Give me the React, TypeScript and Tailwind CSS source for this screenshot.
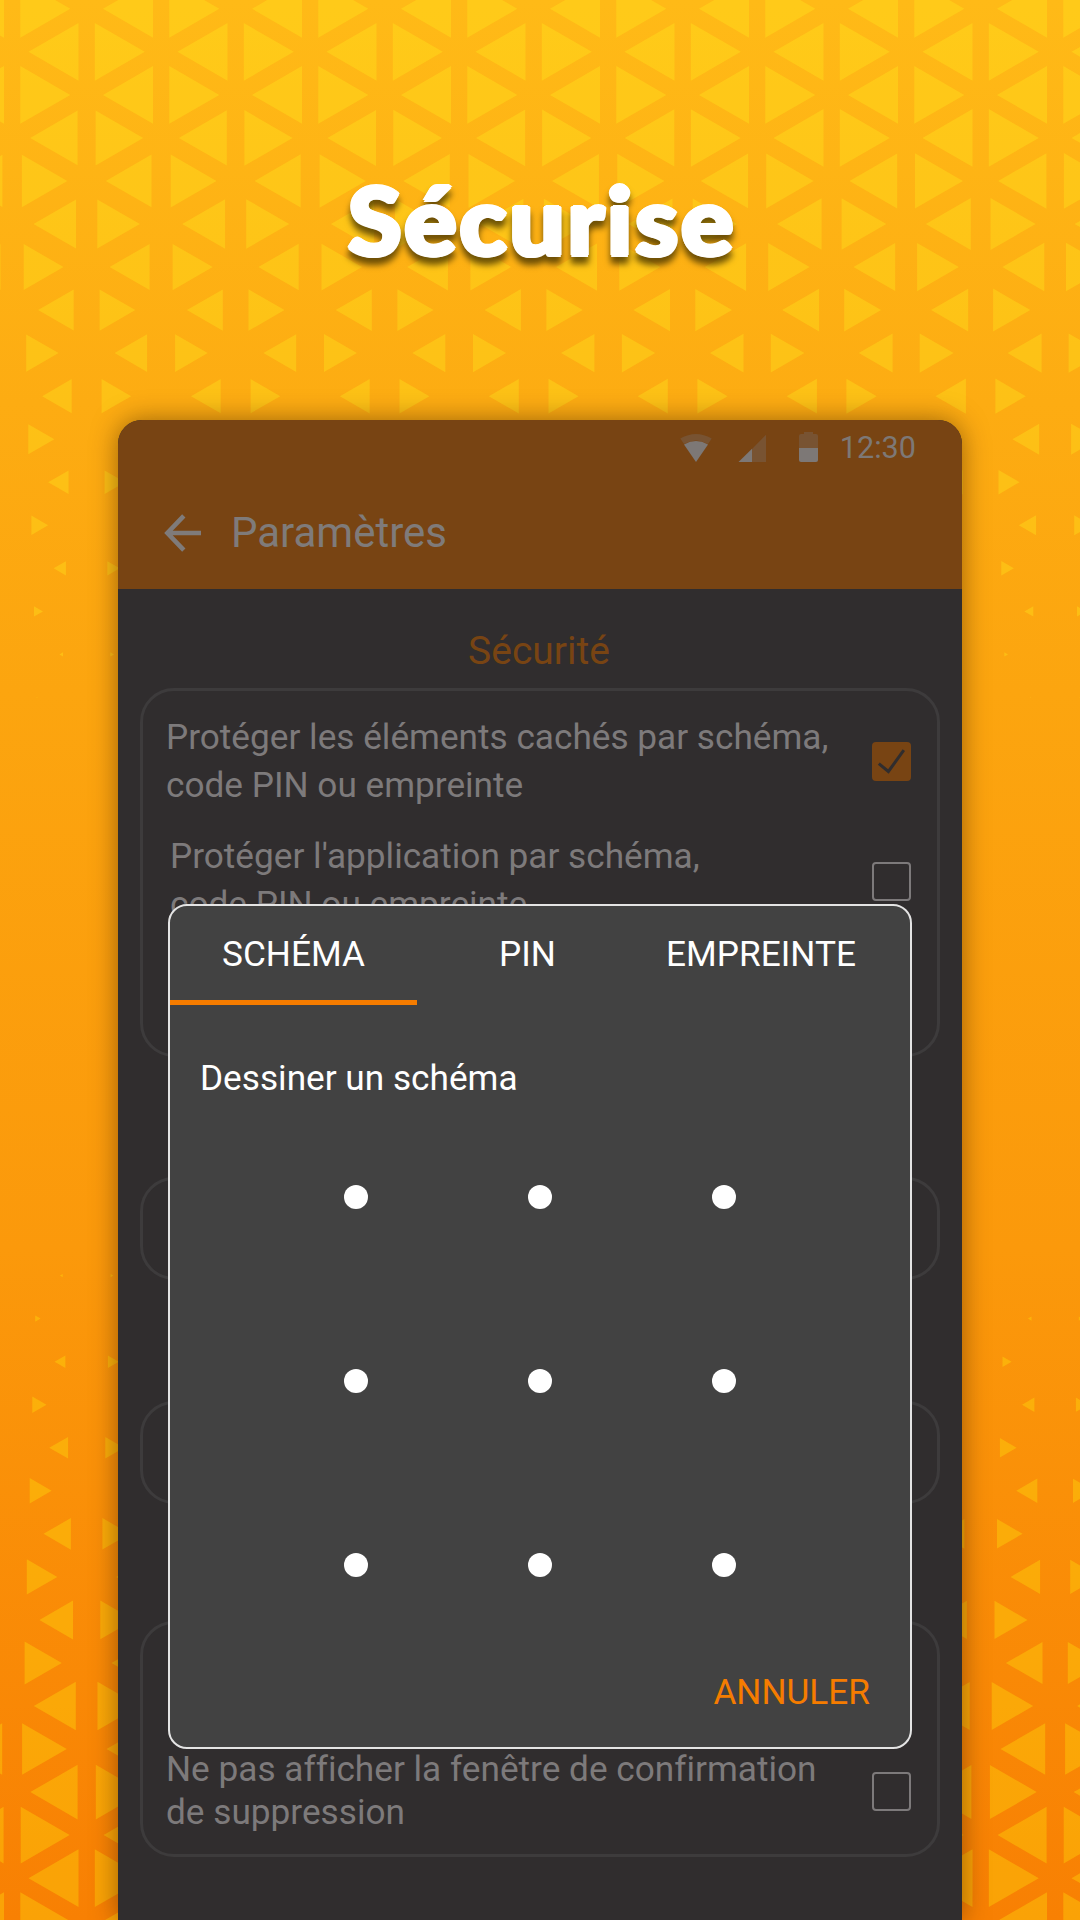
import React from "react";

type Field = { firstY: number; firstIsOdd: boolean; sizes: number[]; drift: number[] };

const TOP: Field = {
  firstY: 8.8,
  firstIsOdd: false,
  sizes: [50, 50, 50, 47.2, 45.3, 42.3, 39.7, 35.5, 32.3, 29.5, 26, 20.5, 16.7, 12.3, 9, 3.7, 1],
  drift: [0, 0, 0, 4, 3, 3, 2.4, 1.8, 1.8, 1, 0.8, 0.6, 0.6, 0.4, 0, 0, 0],
};
const BOTTOM: Field = {
  firstY: 1275.6,
  firstIsOdd: true,
  sizes: [3, 5.5, 11, 14.3, 19, 22, 27.5, 30.5, 33.7, 37.3, 42, 44.7, 47.3, 49, 50, 50],
  drift: [-3, -2, -2, -2, -2.5, -1, -2, -1, -0.7, -0.8, -0.5, 0, -0.5, 0, 0, 0],
};

function fieldPath({ firstY, firstIsOdd, sizes, drift }: Field) {
  let d = "";
  sizes.forEach((base, row) => {
    const y = firstY + row * 43.04;
    const odd = (row % 2 === 1) !== firstIsOdd;
    const shift = odd ? 74.5 : 0;
    for (let col = -2; col < 9; col++) {
      const right = 37 + shift + col * 149;
      const left = 136.3 - shift + col * 149;
      [
        [right, 1],
        [left, -1],
      ].forEach(([cx, dir]) => {
        const h = Math.min(50, Math.max(0, base + (drift[row] * cx) / 1080));
        const side = h * 0.5774;
        const bx = cx - (dir * h) / 3;
        const ax = cx + (dir * h * 2) / 3;
        d += `M${bx.toFixed(1)} ${(y - side).toFixed(1)}L${ax.toFixed(1)} ${y.toFixed(1)}L${bx.toFixed(1)} ${(y + side).toFixed(1)}Z`;
      });
    }
  });
  return d;
}

function Backdrop() {
  return (
    <svg className="absolute inset-0 h-full w-full" viewBox="0 0 1080 1920">
      <path d={fieldPath(TOP)} fill="#ffee1e" fillOpacity="0.33" />
      <path d={fieldPath(BOTTOM)} fill="#ffee0c" fillOpacity="0.31" />
    </svg>
  );
}

function StatusBar() {
  return (
    <div className="flex h-14 items-center justify-end pr-[46px]">
      <svg className="h-8 w-[140px]" viewBox="0 0 140 32" fill="#7d7876">
        <path d="M0.3 6.6Q16 -2.4 31.7 6.6L28 12Q16 5 4 12Z" fill="#785332" />
        <path d="M4 12.4Q16 5.6 28 12.4L16 30Z" />
        <path d="M86 2.8V30H72V17Z" fill="#785332" />
        <path d="M72 16.8V30H58.5Z" />
        <path d="M119 16V4Q119 2 121 2H124V0H133V2H136Q138 2 138 4V16Z" fill="#785332" />
        <path d="M119 16H138V28Q138 30 136 30H121Q119 30 119 28Z" />
      </svg>
      <span className="ml-[20px] pt-px text-[30.6px] leading-none text-[#7d7876]">12:30</span>
    </div>
  );
}

function AppBar() {
  return (
    <div className="flex h-[113px] items-center text-[#7f7b7a]">
      <svg className="ml-[46px] h-[38px] w-[37px]" viewBox="0 0 37 38" fill="none" stroke="currentColor" strokeWidth="4.6">
        <path d="M37 19H4M19.8 1.8L3.4 19L19.8 36.2" />
      </svg>
      <span className="ml-[30px] text-[42px] leading-none">Paramètres</span>
    </div>
  );
}

function Checkbox({ checked = false }: { checked?: boolean }) {
  return checked ? (
    <span className="h-[39px] w-[39px] shrink-0 rounded-[4px] bg-[#784413]">
      <svg viewBox="0 0 39 39" fill="none" stroke="#302d2e" strokeWidth="3">
        <path d="M6.8 21.6L16.4 29.5L31.8 8.2" />
      </svg>
    </span>
  ) : (
    <span className="mt-[2px] h-[39px] w-[39px] shrink-0 rounded-[4px] border-2 border-[#7d7a7b]" />
  );
}

function Card({ className, children }: { className: string; children?: React.ReactNode }) {
  return (
    <section className={`mx-[22px] rounded-[34px] border-[3px] border-[#3d3b3c] pr-[26px] pl-[23px] ${className}`}>
      {children}
    </section>
  );
}

function Settings() {
  return (
    <div className="text-[35.2px] text-[#7d7a7b] [font-variant-ligatures:none]">
      <h2 className="pt-[32px] pr-[2px] text-center text-[39px] leading-[60px] text-[#784413]">Sécurité</h2>
      <Card className="mt-[7px] h-[369px] pt-[23px]">
        <div className="flex items-center justify-between leading-[47.5px] whitespace-nowrap">
          <p>
            Protéger les éléments cachés par schéma,
            <br />
            code PIN ou empreinte
          </p>
          <Checkbox checked />
        </div>
        <div className="mt-[24px] flex items-center justify-between leading-[47.5px] whitespace-nowrap">
          <p className="pl-1">
            Protéger l'application par schéma,
            <br />
            code PIN ou empreinte
          </p>
          <Checkbox />
        </div>
      </Card>
      <Card className="mt-[120px] h-[103px]" />
      <Card className="mt-[121px] h-[103px]" />
      <Card className="mt-[117px] h-[236px] pt-[124px]">
        <div className="flex items-center justify-between leading-[42.5px] whitespace-nowrap">
          <p>
            Ne pas afficher la fenêtre de confirmation
            <br />
            de suppression
          </p>
          <Checkbox />
        </div>
      </Card>
    </div>
  );
}

function PatternDialog() {
  return (
    <div className="absolute top-[484px] left-[50px] flex h-[845px] w-[744px] flex-col overflow-hidden rounded-[19px] border-2 border-[#e4e4e4] bg-[#424242] text-[35.2px] text-white">
      <div className="grid h-[99px] grid-cols-[247px_221px_246px] text-center leading-[92px]">
        <span className="border-b-[5px] border-[#f57c00] pt-[2px]">SCHÉMA</span>
        <span className="pt-[2px]">PIN</span>
        <span className="pt-[2px]">EMPREINTE</span>
      </div>
      <p className="mt-[49px] pl-[30px] leading-[48px]">Dessiner un schéma</p>
      <div className="mt-[83px] grid grid-cols-3 gap-[160px] self-center">
        {Array.from({ length: 9 }, (_, i) => (
          <span key={i} className="h-6 w-6 rounded-full bg-white" />
        ))}
      </div>
      <button className="mt-auto mr-[40px] mb-[31px] self-end leading-[48px] text-[#f57c00]">ANNULER</button>
    </div>
  );
}

export default function App() {
  return (
    <main className="relative flex h-[1920px] w-[1080px] flex-col overflow-hidden bg-[linear-gradient(180deg,#ffba17_0%,#fdac12_21%,#fca50f_36%,#fb990b_65%,#f88003_100%)] font-['Roboto',sans-serif]">
      <Backdrop />
      <header className="relative flex h-[420px] shrink-0 justify-center pt-[159px]">
        <h1 className="scale-x-[1.05] pl-[3px] text-[93px] leading-[120px] font-black tracking-[2.6px] text-white drop-shadow-[0_7px_3px_rgba(60,45,0,0.75)] [font-family:Lato,sans-serif] [text-shadow:2.3px_0_white,-2.3px_0_white,0_2px_white,0_-2px_white,1.5px_1.5px_white,-1.5px_1.5px_white,1.5px_-1.5px_white,-1.5px_-1.5px_white]">
          Sécurise
        </h1>
      </header>
      <div className="relative mx-[118px] h-[1500px] overflow-visible rounded-t-[24px] bg-[#302d2e] shadow-[0_0_26px_rgba(60,30,0,0.5)]">
        <div className="h-[169px] rounded-t-[24px] bg-[#784413]">
          <StatusBar />
          <AppBar />
        </div>
        <Settings />
        <PatternDialog />
      </div>
    </main>
  );
}
